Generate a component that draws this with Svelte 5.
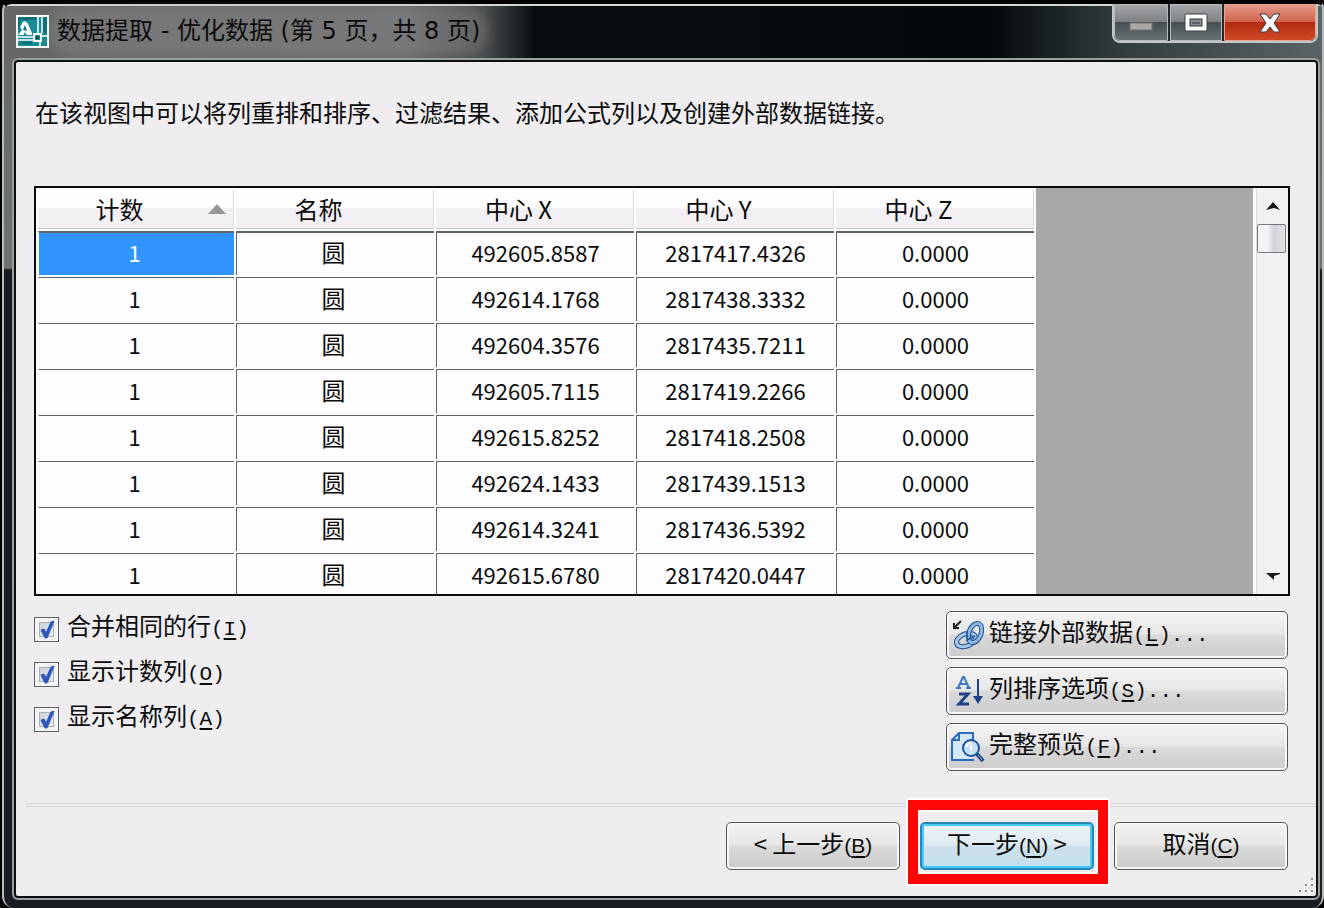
<script>
	const columns = ['计数', '名称', '中心 X', '中心 Y', '中心 Z'];

	const rows = [
		['1', '圆', '492605.8587', '2817417.4326', '0.0000'],
		['1', '圆', '492614.1768', '2817438.3332', '0.0000'],
		['1', '圆', '492604.3576', '2817435.7211', '0.0000'],
		['1', '圆', '492605.7115', '2817419.2266', '0.0000'],
		['1', '圆', '492615.8252', '2817418.2508', '0.0000'],
		['1', '圆', '492624.1433', '2817439.1513', '0.0000'],
		['1', '圆', '492614.3241', '2817436.5392', '0.0000'],
		['1', '圆', '492615.6780', '2817420.0447', '0.0000']
	];

	let options = $state([
		{ id: 'combine', label: '合并相同的行', key: 'I', checked: true },
		{ id: 'count', label: '显示计数列', key: 'O', checked: true },
		{ id: 'name', label: '显示名称列', key: 'A', checked: true }
	]);

	const actions = [
		{ icon: 'link', label: '链接外部数据', key: 'L' },
		{ icon: 'sort', label: '列排序选项', key: 'S' },
		{ icon: 'preview', label: '完整预览', key: 'F' }
	];

	let selected = $state({ row: 0, col: 0 });
</script>

<div class="window">
	<header class="titlebar">
		<svg class="app-icon" width="33" height="33" viewBox="0 0 33 33">
			<rect width="33" height="33" fill="#fff" />
			<rect x="2" y="2" width="29" height="29" fill="#168c94" />
			<path d="M2 2h18v3H2zM27 2h4v16h-4zM2 5h2v9H2z" fill="#0c6f78" />
			<path d="M22 2v16M26 2v16M2 22h15M2 25h15M24 25v6M25 21h6" stroke="#fff" stroke-width="1.5" />
			<path d="M2 20h6v-3l3 3h5v-2L12 9q-2-4-5-2L4 12l2 3z" fill="#fff" />
			<path d="M7 15l2-5 2 6z" fill="#0c6f78" />
			<rect x="18" y="19" width="7" height="7" fill="#168c94" stroke="#fff" stroke-width="2" />
			<rect x="20" y="21" width="3" height="3" fill="#0b4f57" />
			<path d="M5 28h11" stroke="#0c6f78" stroke-width="3" />
		</svg>
		<h1 class="title">数据提取 - 优化数据 (第 5 页，共 8 页)</h1>
		<div class="controls">
			<button class="control" aria-label="最小化">
				<svg width="24" height="10" viewBox="0 0 24 10">
					<rect x="1" y="1" width="22" height="7" fill="#aaa8a9" stroke="#777" />
				</svg>
			</button>
			<button class="control maximize" aria-label="最大化">
				<svg width="24" height="20" viewBox="0 0 24 20">
					<rect x="1" y="1" width="22" height="17" rx="1" fill="#fff" stroke="#3a4347" />
					<rect x="6" y="6" width="12" height="7" fill="#838b8f" stroke="#30383b" />
					<path d="M8 10h8" stroke="#30383b" />
				</svg>
			</button>
			<button class="control close" aria-label="关闭">
				<svg width="24" height="20" viewBox="0 0 24 20">
					<path d="M2 1h6l4 5 4-5h6l-6 9 6 9h-6l-4-5-4 5H2l6-9z" fill="#fff" stroke="#3e3840" stroke-linejoin="round" />
				</svg>
			</button>
		</div>
	</header>

	<main class="panel">
		<p class="description">在该视图中可以将列重排和排序、过滤结果、添加公式列以及创建外部数据链接。</p>

		<div class="grid">
			<div class="grid-body">
				<table>
					<thead>
						<tr>
							{#each columns as column, i}
								<th aria-sort={i === 0 ? 'ascending' : undefined}>
									<button class="column-button">
										<span class="column-label">{column}</span>
										<span class="sort-slot">
											{#if i === 0}
												<svg width="18" height="10" viewBox="0 0 18 10">
													<path d="M9 0l9 10H0z" fill="#98969a" />
												</svg>
											{/if}
										</span>
									</button>
								</th>
							{/each}
						</tr>
					</thead>
					<tbody>
						{#each rows as row, r}
							<tr>
								{#each row as value, c}
									<td
										class:selected={selected.row === r && selected.col === c}
										onclick={() => (selected = { row: r, col: c })}
									>{value}</td>
								{/each}
							</tr>
						{/each}
					</tbody>
				</table>
			</div>
			<div class="scrollbar">
				<button class="scroll-button" aria-label="向上滚动">
					<svg width="14" height="8" viewBox="0 0 14 8">
						<path d="M0 8l7-8 7 8-6-2z" fill="#181818" />
					</svg>
				</button>
				<div class="thumb"></div>
				<button class="scroll-button down" aria-label="向下滚动">
					<svg width="14" height="8" viewBox="0 0 14 8">
						<path d="M0 1h14v1L8 4v4z" fill="#181818" />
					</svg>
				</button>
			</div>
		</div>

		<div class="tools">
			<div class="options">
				{#each options as option}
					<label class="option" for={option.id}>
						<span class="check">
							<input type="checkbox" id={option.id} bind:checked={option.checked} />
							{#if option.checked}
								<svg width="25" height="25" viewBox="0 0 25 25">
									<path d="M7 13l3-1 2 4 5-11 3-1-7 17h-2z" fill="#2c56bd" stroke="#2c56bd" />
								</svg>
							{/if}
						</span>
						<span>{option.label}<span class="mnemonic">(<u>{option.key}</u>)</span></span>
					</label>
				{/each}
			</div>

			<div class="actions">
				{#each actions as action}
					<button class="button action">
						<svg width="34" height="34" viewBox="0 0 34 34" fill="none">
							{#if action.icon === 'link'}
								<path d="M10 3L3 10M3 5v5h5" stroke="#222" stroke-width="2" />
								<ellipse cx="15" cy="22" rx="10" ry="6" transform="rotate(-22 15 22)" stroke="#1f4f91" stroke-width="5" />
								<ellipse cx="15" cy="22" rx="10" ry="6" transform="rotate(-22 15 22)" stroke="#a4c8ec" stroke-width="3" />
								<ellipse cx="24" cy="15" rx="6" ry="10" transform="rotate(22 24 15)" stroke="#1f4f91" stroke-width="5" />
								<ellipse cx="24" cy="15" rx="6" ry="10" transform="rotate(22 24 15)" stroke="#8db9e4" stroke-width="3" />
								<path d="M16 14v8l8-4" stroke="#2c64a8" stroke-width="2" />
							{:else if action.icon === 'sort'}
								<path d="M7 14l5-11h1l5 11M9 10h7M5 14h5M15 14h5" stroke="#3e78c0" stroke-width="2" />
								<path d="M8 20h9L8 30h10" stroke="#1d4286" stroke-width="3" />
								<path d="M27 5v19" stroke="#1d4286" stroke-width="2" />
								<path d="M22 22h10l-5 8z" fill="#1d4286" />
							{:else}
								<path d="M7 3h16v12l-3 15H1V10z" fill="#d5e8fa" />
								<path d="M22 11V3H8L1 10v20h22M8 3v7H1" stroke="#2d6bc0" stroke-width="2" />
								<circle cx="20" cy="18" r="8" fill="#c9e1f8" stroke="#245399" stroke-width="2" />
								<path d="M15 17q1-4 5-4M20 15v6" stroke="#fff" stroke-width="2" />
								<path d="M26 24l6 7" stroke="#1d4582" stroke-width="4" />
								<path d="M27 25l4 5" stroke="#85b2e0" />
							{/if}
						</svg>
						<span>{action.label}<span class="mnemonic">(<u>{action.key}</u>)...</span></span>
					</button>
				{/each}
			</div>
		</div>

		<footer class="wizard">
			<button class="button step">&lt; 上一步<span class="latin">(<u>B</u>)</span></button>
			<div class="highlighted">
				<button class="button step primary">下一步<span class="latin">(<u>N</u>)</span> &gt;</button>
			</div>
			<button class="button step">取消<span class="latin">(<u>C</u>)</span></button>
			<svg class="grip" width="16" height="16" viewBox="0 0 16 16">
				<path d="M13 1h2M13 7h2M7 7h2M13 13h2M7 13h2M1 13h2" stroke="#8b898b" stroke-width="2" />
			</svg>
		</footer>
	</main>
</div>

<style>
	:global(body) {
		margin: 0;
		background: #000;
	}

	.window {
		box-sizing: border-box;
		display: flex;
		flex-direction: column;
		min-height: 100vh;
		margin-left: 2px;
		padding: 0 4px 10px 6px;
		border: 2px solid #b9bcbc;
		border-width: 4px 2px 0;
		border-top-color: #000;
		border-radius: 10px 8px 12px 12px;
		background:
			linear-gradient(#d5d7d5, #d5d7d5) top / 100% 2px no-repeat,
			linear-gradient(90deg, #666768 0, #6b6c6d 400px, #4b4e50 480px, #080d10 530px, #05090c 75%, #30393c 84%, #5a6467 100%) top / 100% 58px no-repeat,
			linear-gradient(#626768 0, #6d7273 264px, #151b1e 266px, #171d20 100%);
		color: #0b0b0b;
		font-family: 'Noto Sans CJK SC', sans-serif;
		font-size: 24px;
		line-height: 32px;
	}

	button {
		margin: 0;
		padding: 0;
		border: none;
		background: none;
		color: inherit;
		font: inherit;
	}

	.titlebar {
		display: flex;
		align-items: center;
		gap: 8px;
		height: 54px;
		padding-left: 6px;
	}

	.app-icon {
		flex-shrink: 0;
	}

	.title {
		margin: 0;
		border-radius: 20px;
		background: rgba(150, 150, 150, 0.3);
		box-shadow: 0 0 10px 8px rgba(150, 150, 150, 0.3);
		font-family: 'DejaVu Sans', 'Noto Sans CJK SC', sans-serif;
		font-size: 24px;
		font-weight: 400;
		line-height: 32px;
		white-space: nowrap;
	}

	.controls {
		display: flex;
		align-self: flex-start;
		margin-left: auto;
		border: 2px solid #c3c7c8;
		border-top: none;
		border-radius: 0 0 8px 8px;
		background: #22282b;
		gap: 2px;
		overflow: hidden;
	}

	.control {
		display: flex;
		align-items: center;
		justify-content: center;
		box-sizing: border-box;
		width: 54px;
		height: 37px;
		border: 1px solid #b5babd;
		background: linear-gradient(#a5a7a9, #7d8184 48%, #474d50 50%, #697174);
	}

	.control:first-child {
		align-items: flex-end;
		padding-bottom: 8px;
		border-bottom-left-radius: 6px;
	}

	.maximize {
		width: 52px;
	}

	.close {
		width: 92px;
		border-color: #e8a493;
		border-bottom-right-radius: 6px;
		background: linear-gradient(#e39a88, #cf624c 48%, #b22a10 50%, #cf4a28);
	}

	.panel {
		display: flex;
		flex: 1;
		flex-direction: column;
		border: 2px solid #0c1012;
		border-radius: 4px;
		box-shadow: 0 0 0 2px #9b9fa0;
		margin: 2px 0 0 4px;
		background: #efedef;
	}

	.description {
		margin: 34px 26px 58px 19px;
	}

	.grid {
		display: flex;
		height: 406px;
		margin: 0 26px 0 18px;
		border: 2px solid #0a0a0a;
		background: #fdfcfe;
		overflow: hidden;
	}

	.grid-body {
		flex: 1;
		background: #a9a8a8;
		overflow: hidden;
	}

	table {
		width: 1000px;
		table-layout: fixed;
		border-spacing: 2px;
		background: #fdfcfe;
	}

	th,
	td {
		box-sizing: border-box;
		padding: 0;
		font-weight: 400;
		text-align: center;
	}

	th:first-child {
		width: 196px;
	}

	th {
		height: 39px;
		border-right: 1px solid #d8dde0;
		border-bottom: 1px solid #c5c8ca;
		background: linear-gradient(#fefdff 45%, #f2f0f4 50%, #f2f0f3);
	}

	.column-button {
		display: flex;
		align-items: center;
		width: 100%;
	}

	.column-label {
		flex: 1;
	}

	.sort-slot {
		display: flex;
		justify-content: center;
		width: 32px;
	}

	td {
		height: 44px;
		padding-bottom: 4px;
		border-top: 1px solid #606468;
		border-left: 1px solid #606468;
		font-size: 22px;
	}

	tbody tr:first-child td {
		border-top-width: 2px;
	}

	td:first-child {
		padding-right: 4px;
		border-left-color: #fdfcfe;
	}

	td:nth-child(2) {
		padding-right: 4px;
		font-size: 24px;
	}

	td.selected {
		background: #3295ff;
		color: #fff;
	}

	.scrollbar {
		display: flex;
		flex-direction: column;
		width: 31px;
		margin-left: 3px;
		border-left: 1px solid #dcdcdf;
		background: #f1f0f3;
	}

	.scroll-button {
		display: flex;
		align-items: center;
		justify-content: center;
		height: 36px;
	}

	.scroll-button.down {
		margin-top: auto;
	}

	.thumb {
		box-sizing: border-box;
		width: 29px;
		height: 29px;
		border: 1px solid #77777f;
		border-radius: 2px;
		background: linear-gradient(90deg, #f4f3f6 35%, #d2d1d7 60%, #e4e3e8);
	}

	.tools {
		display: flex;
		align-items: flex-start;
		justify-content: space-between;
		margin: 15px 28px 0 18px;
	}

	.options {
		display: flex;
		flex-direction: column;
		gap: 13px;
	}

	.option {
		display: flex;
		align-items: center;
		gap: 8px;
		height: 32px;
	}

	.check {
		display: grid;
		margin-top: 4px;
	}

	.check input,
	.check svg {
		grid-area: 1 / 1;
	}

	.check svg {
		pointer-events: none;
	}

	.check input {
		appearance: none;
		width: 25px;
		height: 25px;
		margin: 0;
		border: 1px solid #606266;
		background: linear-gradient(135deg, #c3c8ce, #f4f4f6);
		box-shadow: inset 0 0 0 4px #f5f4f5, inset 0 0 0 5px #a9b0b8;
	}

	.mnemonic {
		font-family: 'Liberation Mono', monospace;
		font-size: 21px;
	}

	.latin {
		font-family: 'Liberation Sans', sans-serif;
		font-size: 21px;
	}

	u {
		text-decoration-thickness: 2px;
		text-underline-offset: 3px;
	}

	.actions {
		display: flex;
		flex-direction: column;
		gap: 8px;
		width: 342px;
	}

	.button {
		box-sizing: border-box;
		height: 48px;
		padding-bottom: 4px;
		border: 1px solid #55565a;
		border-radius: 5px;
		background: linear-gradient(#f4f3f4, #e8e7e8 48%, #dbdadb 50%, #cdcccd);
		box-shadow: inset 0 0 0 2px #f8f7f8;
	}

	.action {
		display: flex;
		align-items: center;
		gap: 4px;
		padding: 0 4px 4px;
		text-align: left;
	}

	.action svg {
		margin-top: 4px;
	}

	.wizard {
		position: relative;
		display: flex;
		justify-content: flex-end;
		gap: 20px;
		margin: auto 0 0 10px;
		padding: 15px 28px 26px 0;
		border-top: 4px double #d3d6d9;
	}

	.step {
		width: 174px;
	}

	.primary {
		border: 2px solid #2687b8;
		background: linear-gradient(#edf4f8, #deeaf2 48%, #cfe1ec 50%, #c3dfee);
		box-shadow: inset 0 0 0 2px #3fcdf8;
	}

	.highlighted {
		position: relative;
	}

	.highlighted::after {
		content: '';
		position: absolute;
		inset: -22px -14px -14px -12px;
		border: 10px solid #fe0606;
		box-shadow: 0 0 0 2px #fdfafa, inset 0 0 0 2px #fdfafa;
		pointer-events: none;
	}

	.grip {
		position: absolute;
		right: 2px;
		bottom: 2px;
	}
</style>
